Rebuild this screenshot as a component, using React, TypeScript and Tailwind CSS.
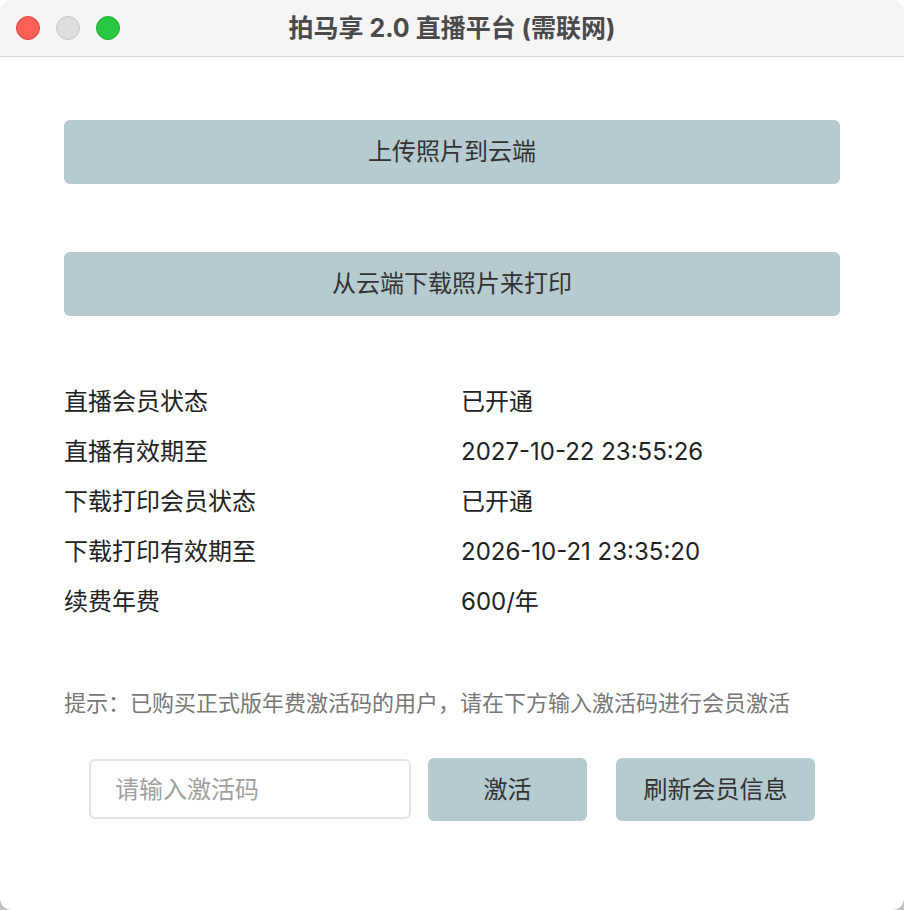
import React from "react";

const rows: { label: string; value: string }[] = [
  { label: "直播会员状态", value: "已开通" },
  { label: "直播有效期至", value: "2027-10-22 23:55:26" },
  { label: "下载打印会员状态", value: "已开通" },
  { label: "下载打印有效期至", value: "2026-10-21 23:35:20" },
  { label: "续费年费", value: "600/年" },
];

const font = "font-['Inter','Noto_Sans_CJK_SC',sans-serif]";

export default function App() {
  return (
    <div
      className={`w-[904px] h-[910px] bg-[linear-gradient(to_bottom,#ffffff_50%,#c2c2c2_50%)] ${font}`}
    >
      <div className="w-full h-full rounded-[12px] bg-white overflow-hidden flex flex-col">
        {/* title bar */}
        <div className="h-[57px] shrink-0 bg-[#f5f5f5] border-b border-[#dadada] grid grid-cols-[1fr_auto_1fr] items-center">
          <div className="flex items-center gap-[16px] pl-[16px]">
            <span className="w-[24px] h-[24px] rounded-full bg-[#ff5f57] border border-[#e2463f]" />
            <span className="w-[24px] h-[24px] rounded-full bg-[#dddddd] border border-[#c6c6c6]" />
            <span className="w-[24px] h-[24px] rounded-full bg-[#28c840] border border-[#1fae33]" />
          </div>
          <div className="text-[25px] font-bold text-[#4a4a4a] leading-none">
            拍马享 2.0 直播平台 (需联网)
          </div>
          <div />
        </div>

        <div className="px-[64px] pt-[63px] flex flex-col">
          <button className="h-[64px] rounded-[6px] bg-[#b5cbd0] text-[24px] text-[#333333]">
            上传照片到云端
          </button>
          <button className="mt-[68px] h-[64px] rounded-[6px] bg-[#b5cbd0] text-[24px] text-[#333333]">
            从云端下载照片来打印
          </button>

          <div className="mt-[61px] flex flex-col">
            {rows.map((r) => (
              <div key={r.label} className="h-[50px] flex items-center text-[24px] text-[#222222]">
                <span className="w-[397px]">{r.label}</span>
                <span>{r.value}</span>
              </div>
            ))}
          </div>

          <p className="mt-[62px] h-[28px] leading-[28px] text-[22px] text-[#777777] whitespace-nowrap">
            提示：已购买正式版年费激活码的用户，请在下方输入激活码进行会员激活
          </p>

          <div className="mt-[41px] flex justify-center items-start">
            <input
              placeholder="请输入激活码"
              className="mt-[1px] w-[322px] h-[60px] border-2 border-[#e4e4e4] rounded-[6px] px-[24px] text-[24px] text-[#333333] placeholder:text-[#a0a0a0] outline-none"
            />
            <button className="ml-[17px] w-[159px] h-[63px] rounded-[6px] bg-[#b5cbd0] text-[24px] text-[#333333]">
              激活
            </button>
            <button className="ml-[29px] w-[199px] h-[63px] rounded-[6px] bg-[#b5cbd0] text-[24px] text-[#333333]">
              刷新会员信息
            </button>
          </div>
        </div>
      </div>
    </div>
  );
}
